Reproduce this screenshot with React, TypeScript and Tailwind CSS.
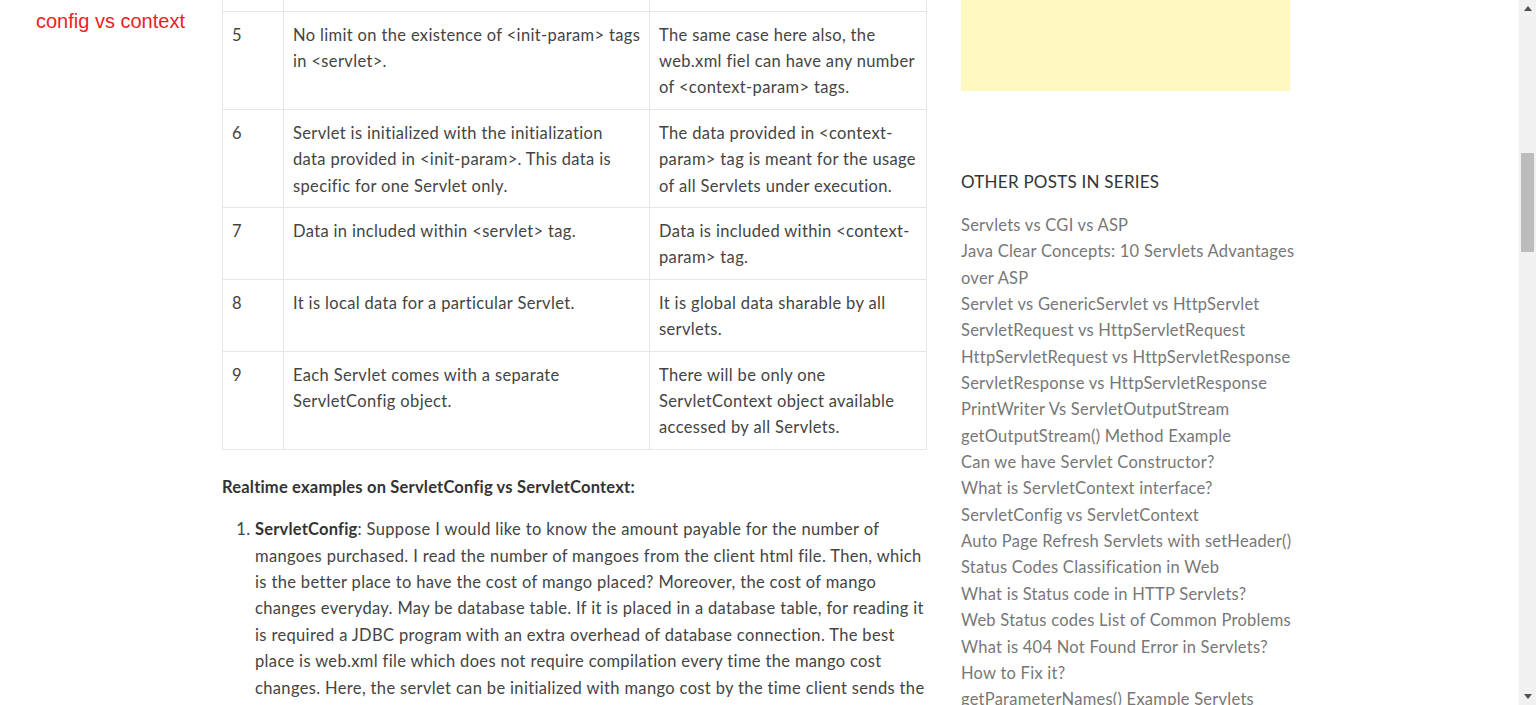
import React from "react";

const rows: { n: string; a: string[]; b: string[] }[] = [
  {
    n: "5",
    a: ["No limit on the existence of <init-param> tags", "in <servlet>."],
    b: ["The same case here also, the", "web.xml fiel can have any number", "of <context-param> tags."],
  },
  {
    n: "6",
    a: ["Servlet is initialized with the initialization", "data provided in <init-param>. This data is", "specific for one Servlet only."],
    b: ["The data provided in <context-", "param> tag is meant for the usage", "of all Servlets under execution."],
  },
  {
    n: "7",
    a: ["Data in included within <servlet> tag."],
    b: ["Data is included within <context-", "param> tag."],
  },
  {
    n: "8",
    a: ["It is local data for a particular Servlet."],
    b: ["It is global data sharable by all", "servlets."],
  },
  {
    n: "9",
    a: ["Each Servlet comes with a separate", "ServletConfig object."],
    b: ["There will be only one", "ServletContext object available", "accessed by all Servlets."],
  },
];

const links: string[][] = [
  ["Servlets vs CGI vs ASP"],
  ["Java Clear Concepts: 10 Servlets Advantages", "over ASP"],
  ["Servlet vs GenericServlet vs HttpServlet"],
  ["ServletRequest vs HttpServletRequest"],
  ["HttpServletRequest vs HttpServletResponse"],
  ["ServletResponse vs HttpServletResponse"],
  ["PrintWriter Vs ServletOutputStream"],
  ["getOutputStream() Method Example"],
  ["Can we have Servlet Constructor?"],
  ["What is ServletContext interface?"],
  ["ServletConfig vs ServletContext"],
  ["Auto Page Refresh Servlets with setHeader()"],
  ["Status Codes Classification in Web"],
  ["What is Status code in HTTP Servlets?"],
  ["Web Status codes List of Common Problems"],
  ["What is 404 Not Found Error in Servlets?"],
  ["How to Fix it?"],
  ["getParameterNames() Example Servlets"],
];

const para = [
  "mangoes purchased. I read the number of mangoes from the client html file. Then, which",
  "is the better place to have the cost of mango placed? Moreover, the cost of mango",
  "changes everyday. May be database table. If it is placed in a database table, for reading it",
  "is required a JDBC program with an extra overhead of database connection. The best",
  "place is web.xml file which does not require compilation every time the mango cost",
  "changes. Here, the servlet can be initialized with mango cost by the time client sends the",
];

function Lines({ lines }: { lines: string[] }) {
  return (
    <>
      {lines.map((l, i) => (
        <React.Fragment key={i}>
          {i > 0 && <br />}
          {l}
        </React.Fragment>
      ))}
    </>
  );
}

export default function App() {
  return (
    <div className="flex h-[705px] w-[1536px] overflow-hidden bg-white">
      <div className="flex flex-1">
        {/* left label column */}
        <div className="w-[222px] shrink-0 pl-[36px] pt-[10px]">
          <div className="text-[20px] leading-[23px] text-[#ee1c25]" style={{ fontFamily: '"Liberation Sans", Arial, sans-serif' }}>
            config vs context
          </div>
        </div>

        {/* main content */}
        <div
          className="w-[704px] shrink-0 text-[16.5px] leading-[26.4px] tracking-[0.35px] text-[#444]"
          style={{ fontFamily: 'Lato, "Open Sans", sans-serif' }}
        >
          <table className="w-[704px] table-fixed border-collapse">
            <colgroup>
              <col className="w-[61px]" />
              <col className="w-[366px]" />
              <col className="w-[277px]" />
            </colgroup>
            <tbody>
              <tr>
                <td className="h-[11px] border-x border-b border-[#e6e6e6] p-0"></td>
                <td className="h-[11px] border-x border-b border-[#e6e6e6] p-0"></td>
                <td className="h-[11px] border-x border-b border-[#e6e6e6] p-0"></td>
              </tr>
              {rows.map((r) => (
                <tr key={r.n}>
                  <td className="border border-[#e6e6e6] pb-[8px] pl-[9px] pr-[10px] pt-[10px] align-top">{r.n}</td>
                  <td className="whitespace-nowrap border border-[#e6e6e6] pb-[8px] pl-[9px] pr-[10px] pt-[10px] align-top">
                    <Lines lines={r.a} />
                  </td>
                  <td className="whitespace-nowrap border border-[#e6e6e6] pb-[8px] pl-[9px] pr-[10px] pt-[10px] align-top">
                    <Lines lines={r.b} />
                  </td>
                </tr>
              ))}
            </tbody>
          </table>

          <p className="mt-[24px] font-bold tracking-[0.2px] text-[#333]">Realtime examples on ServletConfig vs ServletContext:</p>

          <ol className="mt-[16px] list-decimal pl-[33px]">
            <li className="whitespace-nowrap">
              <strong className="tracking-[0.2px] text-[#333]">ServletConfig</strong>: Suppose I would like to know the amount payable for the number of
              <br />
              <Lines lines={para} />
            </li>
          </ol>
        </div>

        {/* sidebar */}
        <div
          className="ml-[35px] w-[340px] shrink-0"
          style={{ fontFamily: 'Lato, "Open Sans", sans-serif' }}
        >
          <div className="h-[91px] w-[329px] bg-[#fff8c1]"></div>
          <h3 className="mt-[79px] text-[17px] uppercase leading-[24px] tracking-[0.25px] text-[#333]">Other posts in series</h3>
          <ul className="mt-[18px] text-[16.5px] leading-[26.35px] tracking-[0.25px] text-[#777]">
            {links.map((l, i) => (
              <li key={i} className="whitespace-nowrap">
                <Lines lines={l} />
              </li>
            ))}
          </ul>
        </div>
      </div>

      {/* scrollbar */}
      <div className="flex h-[705px] w-[17px] shrink-0 flex-col items-center bg-[#f1f1f1]">
        <div className="flex h-[17px] w-full items-center justify-center">
          <svg width="8" height="5" viewBox="0 0 8 5">
            <path d="M0 5 L4 0 L8 5 Z" fill="#505050" />
          </svg>
        </div>
        <div className="mt-[136px] h-[99px] w-[13px] bg-[#bcbcbc]"></div>
        <div className="flex-1"></div>
        <div className="flex h-[17px] w-full items-center justify-center">
          <svg width="8" height="5" viewBox="0 0 8 5">
            <path d="M0 0 L4 5 L8 0 Z" fill="#505050" />
          </svg>
        </div>
      </div>
    </div>
  );
}
